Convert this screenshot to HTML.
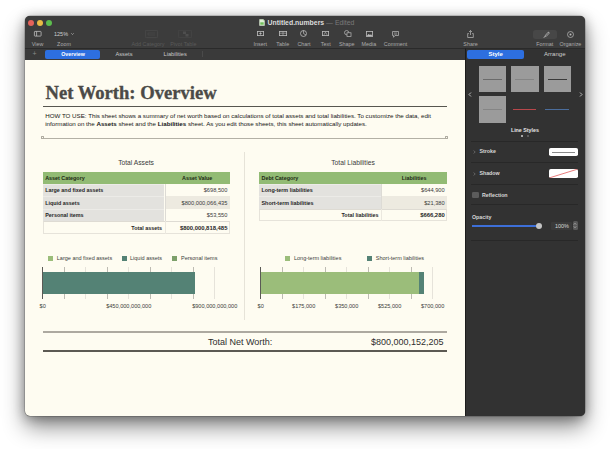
<!DOCTYPE html>
<html><head><meta charset="utf-8">
<style>
*{margin:0;padding:0;box-sizing:border-box}
html,body{width:610px;height:449px;overflow:hidden;background:#fff;font-family:"Liberation Sans",sans-serif}
.a{position:absolute}
#win{position:absolute;left:25px;top:16px;width:560px;height:400px;border-radius:5px;background:#2e2e2e;box-shadow:0 0 0 0.5px rgba(0,0,0,.3),0 2px 12px rgba(0,0,0,.32),0 11px 22px rgba(0,0,0,.45);overflow:hidden}
#tb{left:0;top:0;width:560px;height:32px;background:#3c3c3c}
#tabs{left:0;top:32px;width:440px;height:12px;background:#3a3a3a;border-top:0.7px solid #2a2a2a}
#doc{left:0;top:44px;width:440px;height:356px;background:#fefcf1}
#side{left:440px;top:32px;width:120px;height:368px;background:#323232;border-left:0.7px solid #1c1c1c;border-top:0.7px solid #2a2a2a}
.tl{width:6px;height:6px;border-radius:50%;top:4px}
.lbl{position:absolute;top:40.5px;font-size:5.4px;line-height:6px;color:#ababab;white-space:nowrap;transform:translateX(-50%)}
.dim{color:#5a5a5a}
svg{position:absolute;overflow:visible}
.t{position:absolute;white-space:nowrap}
.tb{font-size:5.4px}
</style></head><body>
<div id="win">
  <div id="tb" class="a">
    <div class="a tl" style="left:3px;background:#e5625a"></div>
    <div class="a tl" style="left:12px;background:#eabb45"></div>
    <div class="a tl" style="left:21px;background:#5dbd4e"></div>
  </div>
  <div id="tabs" class="a"></div>
  <div id="doc" class="a"></div>
  <div id="side" class="a"></div>
</div>

<!-- title -->
<svg style="left:258.8px;top:19.3px" width="6" height="7" viewBox="0 0 6 7"><path d="M0.3 0.3h3.9l1.5 1.5v4.9h-5.4z" fill="#dff0d6"/><path d="M4.2 0.3v1.5h1.5" fill="#b5d9a4"/><rect x="1.3" y="3.3" width="3.4" height="2.4" fill="#6fbf5c"/></svg>
<div class="t" style="left:267.5px;top:18px;font-size:6.9px;font-weight:bold;color:#dcdcdc;line-height:9px">Untitled.numbers <span style="font-weight:normal;color:#7a7a7a">— Edited</span></div>

<!-- toolbar icons -->
<svg style="left:33.8px;top:31.2px" width="7.5" height="5.5" viewBox="0 0 7.5 5.5"><rect x="0.4" y="0.4" width="6.7" height="4.7" rx="0.6" fill="none" stroke="#c4c4c4" stroke-width="0.75"/><line x1="2.6" y1="0.4" x2="2.6" y2="5.1" stroke="#c4c4c4" stroke-width="0.75"/></svg>
<div class="lbl" style="left:37.5px">View</div>
<div class="t" style="left:54px;top:30.6px;font-size:5.5px;line-height:7px;color:#cfcfcf">125%</div><svg style="left:70.5px;top:33.3px" width="3" height="2" viewBox="0 0 3 2"><path d="M0.3 0.3L1.5 1.5L2.7 0.3" fill="none" stroke="#cfcfcf" stroke-width="0.6"/></svg>
<div class="lbl" style="left:64px">Zoom</div>

<svg style="left:144.5px;top:29.5px" width="13" height="8" viewBox="0 0 13 8"><rect x="0.4" y="0.4" width="12.2" height="7.2" rx="0.8" fill="none" stroke="#4c4c4c" stroke-width="0.7"/><path d="M3 3h7M3 5h7M3 3v2" stroke="#4c4c4c" stroke-width="0.6"/></svg>
<div class="lbl dim" style="left:148px">Add Category</div>
<svg style="left:177.5px;top:29.5px" width="14" height="8" viewBox="0 0 14 8"><rect x="0.4" y="0.4" width="13.2" height="7.2" rx="0.8" fill="none" stroke="#474747" stroke-width="0.7"/><path d="M5 1.5h3v2.5h2.5v2.5h-3v-2.5h-2.5z" fill="#4e4e4e"/></svg>
<div class="lbl dim" style="left:183.4px">Pivot Table</div>

<svg style="left:257px;top:31.3px" width="7" height="5" viewBox="0 0 7 5"><rect x="0.4" y="0.4" width="6.2" height="4.2" fill="none" stroke="#bdbdbd" stroke-width="0.8"/><path d="M2.3 2.5h2.4M3.5 1.3v2.4" stroke="#bdbdbd" stroke-width="0.8"/></svg>
<div class="lbl" style="left:260.3px">Insert</div>
<svg style="left:279px;top:31.3px" width="8" height="5" viewBox="0 0 8 5"><rect x="0.4" y="0.4" width="7.2" height="4.2" fill="none" stroke="#bdbdbd" stroke-width="0.8"/><path d="M0.4 2.2h7.2M4 0.4v4.2" stroke="#bdbdbd" stroke-width="0.6"/></svg>
<div class="lbl" style="left:282.8px">Table</div>
<svg style="left:300px;top:30.3px" width="7" height="7" viewBox="0 0 7 7"><circle cx="3.5" cy="3.5" r="3" fill="none" stroke="#bdbdbd" stroke-width="0.8"/><path d="M3.5 3.5V0.5M3.5 3.5L6 5" stroke="#bdbdbd" stroke-width="0.7"/></svg>
<div class="lbl" style="left:304px">Chart</div>
<svg style="left:322px;top:31.3px" width="7" height="5" viewBox="0 0 7 5"><rect x="0.4" y="0.4" width="6.2" height="4.2" fill="none" stroke="#bdbdbd" stroke-width="0.8"/><path d="M2 3.8L3.5 1.2L5 3.8" fill="none" stroke="#bdbdbd" stroke-width="0.6"/></svg>
<div class="lbl" style="left:325.7px">Text</div>
<svg style="left:343.5px;top:30px" width="8" height="7" viewBox="0 0 8 7"><circle cx="2.6" cy="2.6" r="2.1" fill="none" stroke="#bdbdbd" stroke-width="0.7"/><rect x="3" y="2.8" width="4" height="3.8" fill="#363636" stroke="#bdbdbd" stroke-width="0.7"/></svg>
<div class="lbl" style="left:346.8px">Shape</div>
<svg style="left:365.5px;top:31px" width="7" height="6" viewBox="0 0 7 6"><rect x="0.4" y="0.4" width="6.2" height="5" fill="none" stroke="#bdbdbd" stroke-width="0.8"/><path d="M0.8 5L2.5 3L4 4L5 3.2L6.3 5z" fill="#bdbdbd"/></svg>
<div class="lbl" style="left:368.9px">Media</div>
<svg style="left:391.5px;top:30.5px" width="7" height="7" viewBox="0 0 7 7"><path d="M0.5 0.5h6v4h-3.5l-1.5 1.8v-1.8h-1z" fill="none" stroke="#bdbdbd" stroke-width="0.7"/><path d="M1.8 2h3.4M1.8 3.2h3.4" stroke="#bdbdbd" stroke-width="0.5"/></svg>
<div class="lbl" style="left:395.5px">Comment</div>

<svg style="left:467px;top:29.5px" width="7" height="8" viewBox="0 0 7 8"><path d="M1.8 3.5H0.7v4h5.6v-4H5.2" fill="none" stroke="#bdbdbd" stroke-width="0.7"/><path d="M3.5 0.5v4.5M2 2L3.5 0.5L5 2" fill="none" stroke="#bdbdbd" stroke-width="0.7"/></svg>
<div class="lbl" style="left:470.5px">Share</div>
<div class="a" style="left:533px;top:29.5px;width:24px;height:9.5px;border-radius:2.5px;background:#474747"></div>
<svg style="left:542px;top:30.5px" width="8" height="8" viewBox="0 0 8 8"><path d="M1 7L3 5L3.8 5.8z" fill="#cfcfcf"/><path d="M3.2 4.6L6.2 1.2A0.9 0.9 0 0 1 7.2 2.2L4.2 5.4z" fill="none" stroke="#cfcfcf" stroke-width="0.7"/></svg>
<div class="lbl" style="left:544.8px">Format</div>
<svg style="left:566.5px;top:30.5px" width="7" height="7" viewBox="0 0 7 7"><circle cx="3.5" cy="3.5" r="3" fill="none" stroke="#bdbdbd" stroke-width="0.7"/><circle cx="3.5" cy="3.5" r="1" fill="#bdbdbd"/></svg>
<div class="lbl" style="left:570.4px">Organize</div>

<!-- tab bar -->
<div class="t" style="left:32.6px;top:50.4px;font-size:7px;line-height:7px;color:#8a8a8a">+</div>
<div class="a" style="left:45.3px;top:49.5px;width:55px;height:9px;border-radius:2px;background:#2d6fe0"></div>
<div class="t" style="left:73px;top:50.6px;font-size:5.3px;font-weight:bold;line-height:7px;color:#fff;transform:translateX(-50%)">Overview</div>
<div class="t" style="left:124px;top:50.5px;font-size:5.7px;line-height:7px;color:#c8c8c8;transform:translateX(-50%)">Assets</div>
<div class="t" style="left:175.2px;top:50.5px;font-size:5.7px;line-height:7px;color:#c8c8c8;transform:translateX(-50%)">Liabilities</div>
<div class="a" style="left:202.2px;top:51px;width:0.6px;height:6px;background:#4a4a4a"></div>

<!-- sidebar -->
<div class="a" style="left:467px;top:49.8px;width:57.3px;height:8.8px;border-radius:2px;background:#2d6fe0"></div>
<div class="t" style="left:495.6px;top:50.5px;font-size:6px;line-height:7px;font-weight:bold;color:#fff;transform:translateX(-50%)">Style</div>
<div class="t" style="left:554.8px;top:50.5px;font-size:6px;line-height:7px;color:#cfcfcf;transform:translateX(-50%)">Arrange</div>


<!-- document -->
<div class="t" style="left:45.5px;top:83px;font-family:'Liberation Serif',serif;font-weight:bold;font-size:18.6px;line-height:20px;color:#4b4a47;-webkit-text-stroke:0.35px #4b4a47">Net Worth: Overview</div>
<div class="a" style="left:42.6px;top:105.7px;width:404px;height:1.7px;background:#57564f"></div>
<div class="t" style="left:45.2px;top:111.6px;font-size:6.2px;line-height:8.2px;color:#161616">HOW TO USE: This sheet shows a summary of net worth based on calculations of total assets and total liabilities. To customize the data, edit<br>information on the <b>Assets</b> sheet and the <b>Liabilities</b> sheet. As you edit those sheets, this sheet automatically updates.</div>
<div class="a" style="left:43px;top:137.5px;width:403px;height:1.2px;background:#b3b0a5"></div>
<div class="a" style="left:41px;top:136.2px;width:3px;height:3px;border-radius:0.5px;border:0.7px solid #aeaba0;background:#fefcf1"></div>
<div class="a" style="left:445px;top:136.2px;width:3px;height:3px;border-radius:0.5px;border:0.7px solid #aeaba0;background:#fefcf1"></div>

<div class="a" style="left:244.2px;top:152px;width:0.8px;height:168px;background:#e6e3d8"></div>

<div class="t" style="left:136px;top:159px;font-size:6.7px;line-height:8px;color:#3a3a3a;transform:translateX(-50%)">Total Assets</div>
<div class="t" style="left:353px;top:159px;font-size:6.7px;line-height:8px;color:#3a3a3a;transform:translateX(-50%)">Total Liabilities</div>

<!-- tables -->
<div class="a" style="left:42.7px;top:171.5px;width:187.2px;height:12.199999999999989px;background:#92bb74"></div>
<div class="t tb" style="left:45.2px;top:172.0px;line-height:12.199999999999989px;font-weight:bold;color:#1d2a14">Asset Category</div>
<div class="t tb" style="left:197.2px;top:172.0px;line-height:12.199999999999989px;font-weight:bold;color:#1d2a14;transform:translateX(-50%)">Asset Value</div>
<div class="a" style="left:42.7px;top:183.7px;width:121.8px;height:12.400000000000006px;background:#e3e2de;border-top:0.5px solid #ecebe7"></div>
<div class="a" style="left:164.5px;top:183.7px;width:65.4px;height:12.400000000000006px;background:#fefcf1;border-left:0.5px solid #dddbd5"></div>
<div class="t tb" style="left:45.2px;top:184.2px;line-height:12.400000000000006px;font-weight:bold;color:#262626">Large and fixed assets</div>
<div class="t tb" style="right:382.6px;top:184.2px;line-height:12.400000000000006px;color:#3a3a3a;font-size:5.7px">$698,500</div>
<div class="a" style="left:42.7px;top:196.1px;width:121.8px;height:12.5px;background:#e3e2de;border-top:0.5px solid #ecebe7"></div>
<div class="a" style="left:164.5px;top:196.1px;width:65.4px;height:12.5px;background:#edeae0;border-left:0.5px solid #dddbd5"></div>
<div class="t tb" style="left:45.2px;top:196.6px;line-height:12.5px;font-weight:bold;color:#262626">Liquid assets</div>
<div class="t tb" style="right:382.6px;top:196.6px;line-height:12.5px;color:#3a3a3a;font-size:5.7px">$800,000,066,435</div>
<div class="a" style="left:42.7px;top:208.6px;width:121.8px;height:12.400000000000006px;background:#e3e2de;border-top:0.5px solid #ecebe7"></div>
<div class="a" style="left:164.5px;top:208.6px;width:65.4px;height:12.400000000000006px;background:#fefcf1;border-left:0.5px solid #dddbd5"></div>
<div class="t tb" style="left:45.2px;top:209.1px;line-height:12.400000000000006px;font-weight:bold;color:#262626">Personal items</div>
<div class="t tb" style="right:382.6px;top:209.1px;line-height:12.400000000000006px;color:#3a3a3a;font-size:5.7px">$53,550</div>
<div class="a" style="left:42.7px;top:221.0px;width:187.2px;height:12.599999999999994px;border:0.5px solid #e6e3da;border-top:0.5px solid #dedbd3"></div>
<div class="a" style="left:164.5px;top:221.0px;width:0.5px;height:12.6px;background:#ebe8df"></div>
<div class="t tb" style="right:448.0px;top:221.5px;line-height:12.599999999999994px;font-weight:bold;color:#262626">Total assets</div>
<div class="t tb" style="right:382.6px;top:221.5px;line-height:12.599999999999994px;font-weight:bold;color:#262626;font-size:5.9px">$800,000,818,485</div>
<div class="a" style="left:259.0px;top:171.5px;width:188.2px;height:12.199999999999989px;background:#92bb74"></div>
<div class="t tb" style="left:261.5px;top:172.0px;line-height:12.199999999999989px;font-weight:bold;color:#1d2a14">Debt Category</div>
<div class="t tb" style="left:414.1px;top:172.0px;line-height:12.199999999999989px;font-weight:bold;color:#1d2a14;transform:translateX(-50%)">Liabilities</div>
<div class="a" style="left:259.0px;top:183.7px;width:122.0px;height:12.400000000000006px;background:#e3e2de;border-top:0.5px solid #ecebe7"></div>
<div class="a" style="left:381.0px;top:183.7px;width:66.19999999999999px;height:12.400000000000006px;background:#fefcf1;border-left:0.5px solid #dddbd5"></div>
<div class="t tb" style="left:261.5px;top:184.2px;line-height:12.400000000000006px;font-weight:bold;color:#262626">Long-term liabilities</div>
<div class="t tb" style="right:165.3px;top:184.2px;line-height:12.400000000000006px;color:#3a3a3a;font-size:5.7px">$644,900</div>
<div class="a" style="left:259.0px;top:196.1px;width:122.0px;height:12.5px;background:#e3e2de;border-top:0.5px solid #ecebe7"></div>
<div class="a" style="left:381.0px;top:196.1px;width:66.19999999999999px;height:12.5px;background:#edeae0;border-left:0.5px solid #dddbd5"></div>
<div class="t tb" style="left:261.5px;top:196.6px;line-height:12.5px;font-weight:bold;color:#262626">Short-term liabilities</div>
<div class="t tb" style="right:165.3px;top:196.6px;line-height:12.5px;color:#3a3a3a;font-size:5.7px">$21,380</div>
<div class="a" style="left:259.0px;top:208.6px;width:188.2px;height:12.400000000000006px;border:0.5px solid #e6e3da;border-top:0.5px solid #dedbd3"></div>
<div class="a" style="left:381.0px;top:208.6px;width:0.5px;height:12.4px;background:#ebe8df"></div>
<div class="t tb" style="right:231.5px;top:209.1px;line-height:12.400000000000006px;font-weight:bold;color:#262626">Total liabilities</div>
<div class="t tb" style="right:165.3px;top:209.1px;line-height:12.400000000000006px;font-weight:bold;color:#262626;font-size:5.9px">$666,280</div>

<!-- charts -->
<div class="a" style="left:63.80px;top:267px;width:0.8px;height:32px;background:#bdbbb2"></div>
<div class="a" style="left:85.30px;top:267px;width:0.8px;height:32px;background:#e6e3da"></div>
<div class="a" style="left:106.80px;top:267px;width:0.8px;height:32px;background:#bdbbb2"></div>
<div class="a" style="left:128.30px;top:267px;width:0.8px;height:32px;background:#e6e3da"></div>
<div class="a" style="left:149.80px;top:267px;width:0.8px;height:32px;background:#bdbbb2"></div>
<div class="a" style="left:171.30px;top:267px;width:0.8px;height:32px;background:#e6e3da"></div>
<div class="a" style="left:192.80px;top:267px;width:0.8px;height:32px;background:#bdbbb2"></div>
<div class="a" style="left:214.30px;top:267px;width:0.8px;height:32px;background:#e6e3da"></div>
<div class="a" style="left:42.70px;top:272.3px;width:152.50px;height:22.2px;background:#548275"></div>
<div class="a" style="left:42.20px;top:267px;width:1px;height:32px;background:#5a5a55"></div>
<div class="a" style="left:48.1px;top:255.8px;width:5.2px;height:5.2px;background:#9bbd7a"></div>
<div class="t" style="left:56.8px;top:255.2px;font-size:5.5px;line-height:7.5px;color:#3c3c3c">Large and fixed assets</div>
<div class="a" style="left:121.6px;top:255.8px;width:5.2px;height:5.2px;background:#548275"></div>
<div class="t" style="left:130px;top:255.2px;font-size:5.5px;line-height:7.5px;color:#3c3c3c">Liquid assets</div>
<div class="a" style="left:172px;top:255.8px;width:5.2px;height:5.2px;background:#7da06b"></div>
<div class="t" style="left:181px;top:255.2px;font-size:5.5px;line-height:7.5px;color:#3c3c3c">Personal items</div>
<div class="t" style="left:42.7px;top:302.5px;font-size:5.6px;line-height:7.5px;color:#3c3c3c;transform:translateX(-50%)">$0</div>
<div class="t" style="left:128.7px;top:302.5px;font-size:5.6px;line-height:7.5px;color:#3c3c3c;transform:translateX(-50%)">$450,000,000,000</div>
<div class="t" style="left:214.7px;top:302.5px;font-size:5.6px;line-height:7.5px;color:#3c3c3c;transform:translateX(-50%)">$900,000,000,000</div>
<div class="a" style="left:281.79px;top:267px;width:0.8px;height:32px;background:#bdbbb2"></div>
<div class="a" style="left:303.28px;top:267px;width:0.8px;height:32px;background:#e6e3da"></div>
<div class="a" style="left:324.77px;top:267px;width:0.8px;height:32px;background:#bdbbb2"></div>
<div class="a" style="left:346.26px;top:267px;width:0.8px;height:32px;background:#e6e3da"></div>
<div class="a" style="left:367.75px;top:267px;width:0.8px;height:32px;background:#bdbbb2"></div>
<div class="a" style="left:389.24px;top:267px;width:0.8px;height:32px;background:#e6e3da"></div>
<div class="a" style="left:410.73px;top:267px;width:0.8px;height:32px;background:#bdbbb2"></div>
<div class="a" style="left:432.22px;top:267px;width:0.8px;height:32px;background:#e6e3da"></div>
<div class="a" style="left:260.70px;top:272.3px;width:158.30px;height:22.2px;background:#9bbd7a"></div>
<div class="a" style="left:419.00px;top:272.3px;width:5.30px;height:22.2px;background:#548275"></div>
<div class="a" style="left:260.20px;top:267px;width:1px;height:32px;background:#5a5a55"></div>
<div class="a" style="left:284.9px;top:255.8px;width:5.2px;height:5.2px;background:#9bbd7a"></div>
<div class="t" style="left:294px;top:255.2px;font-size:5.5px;line-height:7.5px;color:#3c3c3c">Long-term liabilities</div>
<div class="a" style="left:366.9px;top:255.8px;width:5.2px;height:5.2px;background:#548275"></div>
<div class="t" style="left:375.8px;top:255.2px;font-size:5.5px;line-height:7.5px;color:#3c3c3c">Short-term liabilities</div>
<div class="t" style="left:260.7px;top:302.5px;font-size:5.6px;line-height:7.5px;color:#3c3c3c;transform:translateX(-50%)">$0</div>
<div class="t" style="left:303.7px;top:302.5px;font-size:5.6px;line-height:7.5px;color:#3c3c3c;transform:translateX(-50%)">$175,000</div>
<div class="t" style="left:346.7px;top:302.5px;font-size:5.6px;line-height:7.5px;color:#3c3c3c;transform:translateX(-50%)">$350,000</div>
<div class="t" style="left:389.6px;top:302.5px;font-size:5.6px;line-height:7.5px;color:#3c3c3c;transform:translateX(-50%)">$525,000</div>
<div class="t" style="left:432.6px;top:302.5px;font-size:5.6px;line-height:7.5px;color:#3c3c3c;transform:translateX(-50%)">$700,000</div>
<div class="a" style="left:42.5px;top:331.1px;width:404.1px;height:1.6px;background:#ada9a0"></div>
<div class="a" style="left:42.5px;top:349.8px;width:404.1px;height:2px;background:#5c5a53"></div>
<div class="t" style="left:208px;top:336.6px;font-size:9px;line-height:11px;color:#2e2e2e">Total Net Worth:</div>
<div class="t" style="right:166.4px;top:336.6px;font-size:9px;line-height:11px;color:#2e2e2e">$800,000,152,205</div>

<!-- sidebar content -->
<div class="a" style="left:478.6px;top:65.5px;width:27.5px;height:26.6px;background:#9b9b9b"></div>
<div class="a" style="left:511px;top:65.5px;width:27.8px;height:26.6px;background:#9b9b9b"></div>
<div class="a" style="left:543.7px;top:65.5px;width:27.5px;height:26.6px;background:#9b9b9b"></div>
<div class="a" style="left:478.6px;top:96px;width:27.5px;height:26.6px;background:#9b9b9b"></div>
<div class="a" style="left:482.7px;top:78.75px;width:19.19999999999999px;height:0.9px;background:#6b6b6b"></div>
<div class="a" style="left:514.9px;top:78.8px;width:19.600000000000023px;height:0.8px;background:#858585"></div>
<div class="a" style="left:547.9px;top:78.6px;width:19px;height:1.3px;background:#3a3a3a"></div>
<div class="a" style="left:482.7px;top:108.8px;width:19.19999999999999px;height:0.8px;background:#858585"></div>
<div class="a" style="left:512.7px;top:108.7px;width:23.5px;height:1.0px;background:#b8474b"></div>
<div class="a" style="left:545px;top:108.7px;width:23.600000000000023px;height:1.0px;background:#4b6d9c"></div>
<svg style="left:467.5px;top:91.5px" width="4" height="5" viewBox="0 0 4 5"><path d="M3 0.5L1 2.5L3 4.5" fill="none" stroke="#c8c8c8" stroke-width="0.9"/></svg>
<svg style="left:578.5px;top:91.5px" width="4" height="5" viewBox="0 0 4 5"><path d="M1 0.5L3 2.5L1 4.5" fill="none" stroke="#c8c8c8" stroke-width="0.9"/></svg>
<div class="t" style="left:524.9px;top:126.5px;font-size:5.3px;line-height:7px;font-weight:bold;color:#e6e6e6;transform:translateX(-50%)">Line Styles</div>
<div class="a" style="left:521px;top:134.8px;width:2px;height:2px;border-radius:50%;background:#d0d0d0"></div>
<div class="a" style="left:527px;top:134.8px;width:2px;height:2px;border-radius:50%;background:#6a6a6a"></div>
<div class="a" style="left:471px;top:140.89999999999998px;width:107px;height:0.7px;background:#282828"></div>
<div class="a" style="left:471px;top:162.1px;width:107px;height:0.7px;background:#282828"></div>
<div class="a" style="left:471px;top:183.7px;width:107px;height:0.7px;background:#282828"></div>
<div class="a" style="left:471px;top:204.2px;width:107px;height:0.7px;background:#282828"></div>
<div class="a" style="left:471px;top:239.89999999999998px;width:107px;height:0.7px;background:#282828"></div>
<svg style="left:473px;top:150px" width="3" height="4" viewBox="0 0 3 4"><path d="M0.7 0.5L2.2 2L0.7 3.5" fill="none" stroke="#8a8a8a" stroke-width="0.6"/></svg>
<div class="t" style="left:479.4px;top:148.2px;font-size:5.3px;line-height:7px;font-weight:bold;color:#d8d8d8">Stroke</div>
<div class="a" style="left:548.9px;top:147.9px;width:28.9px;height:8.3px;border-radius:1.8px;background:#fff"></div>
<div class="a" style="left:552px;top:151.65px;width:23px;height:0.7px;background:#8a8a8a"></div>
<svg style="left:473px;top:171.6px" width="3" height="4" viewBox="0 0 3 4"><path d="M0.7 0.5L2.2 2L0.7 3.5" fill="none" stroke="#8a8a8a" stroke-width="0.6"/></svg>
<div class="t" style="left:479.4px;top:169.8px;font-size:5.3px;line-height:7px;font-weight:bold;color:#d8d8d8">Shadow</div>
<div class="a" style="left:548.9px;top:169px;width:28.9px;height:9px;border-radius:1.8px;background:#fff;overflow:hidden"><svg style="left:0;top:0" width="29" height="9" viewBox="0 0 29 9"><line x1="0" y1="9" x2="29" y2="0" stroke="#d44" stroke-width="0.7"/></svg></div>
<div class="a" style="left:472px;top:191.8px;width:6.7px;height:6.7px;border-radius:1.2px;background:#5c5c5c"></div>
<div class="t" style="left:482px;top:191.5px;font-size:5.3px;line-height:7px;font-weight:bold;color:#d8d8d8">Reflection</div>
<div class="t" style="left:472px;top:214px;font-size:5.3px;line-height:7px;font-weight:bold;color:#d8d8d8">Opacity</div>
<div class="a" style="left:472.2px;top:225.4px;width:66.8px;height:1.8px;background:#3d6fd8"></div>
<div class="a" style="left:535.8px;top:223.1px;width:6.4px;height:6.4px;border-radius:50%;background:#c4c4c4"></div>
<div class="a" style="left:550.5px;top:221.5px;width:21.5px;height:8.5px;border-radius:1px;background:#3a3a3a"></div>
<div class="t" style="right:41px;top:222.5px;font-size:5.5px;line-height:7.5px;color:#d8d8d8">100%</div>
<div class="a" style="left:572.8px;top:221.4px;width:5px;height:8.5px;border-radius:1.5px;background:#5a5a5a"></div><svg style="left:573.3px;top:222.2px" width="4" height="7" viewBox="0 0 4 7"><path d="M0.8 2.6L2 1.3L3.2 2.6M0.8 4.4L2 5.7L3.2 4.4" fill="none" stroke="#d0d0d0" stroke-width="0.6"/></svg>
</body></html>
